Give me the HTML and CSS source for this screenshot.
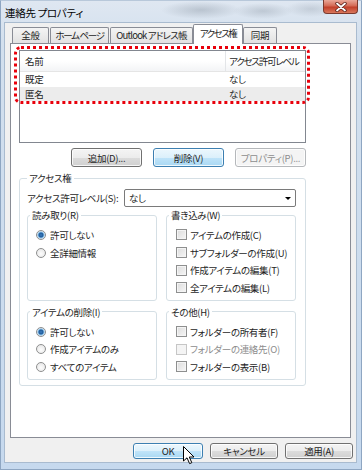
FILE: index.html
```html
<!DOCTYPE html>
<html lang="ja">
<head>
    <meta charset="UTF-8">
    <meta name="viewport" content="width=device-width, initial-scale=1.0">
    <title>連絡先 プロパティ</title>
    <link rel="stylesheet" href="styles.css">
</head>
<body>
    <div class="window">
        <div class="titlebar">
            <span class="title">連絡先 プロパティ</span>
            <div class="close-btn">
                <svg width="12" height="10" viewBox="0 0 12 10">
                    <path d="M2 1.5 L10 8.5 M10 1.5 L2 8.5" stroke="#5a2018" stroke-width="3.4" stroke-linecap="round"/>
                    <path d="M2 1.5 L10 8.5 M10 1.5 L2 8.5" stroke="#fff" stroke-width="1.8" stroke-linecap="round"/>
                </svg>
            </div>
        </div>
        <div class="client">
            <div class="tabs">
                <div class="tab tab-general">全般</div>
                <div class="tab tab-home">ホーム ページ</div>
                <div class="tab tab-outlook">Outlook アドレス帳</div>
                <div class="tab tab-access active">アクセス権</div>
                <div class="tab tab-sync">同期</div>
            </div>
            <div class="pane">
                <div class="list-area">
                    <div class="list">
                        <div class="list-head">
                            <span class="col-name">名前</span>
                            <span class="col-level">アクセス許可レベル</span>
                        </div>
                        <div class="list-row">
                            <span class="col-name">既定</span>
                            <span class="col-level">なし</span>
                        </div>
                        <div class="list-row selected">
                            <span class="col-name">匿名</span>
                            <span class="col-level">なし</span>
                        </div>
                    </div>
                    <div class="highlight"></div>
                </div>
                <div class="list-buttons">
                    <button class="btn">追加(D)...</button>
                    <button class="btn focused">削除(V)</button>
                    <button class="btn" disabled>プロパティ(P)...</button>
                </div>
                <fieldset class="group outer">
                    <legend>アクセス権</legend>
                    <div class="level-row">
                        <span class="level-label">アクセス許可レベル(S):</span>
                        <div class="combo">
                            <span>なし</span>
                            <span class="combo-arrow"></span>
                        </div>
                    </div>
                    <div class="group-grid">
                        <fieldset class="group">
                            <legend>読み取り(R)</legend>
                            <ul class="options">
                                <li><span class="radio checked"></span>許可しない</li>
                                <li><span class="radio"></span>全詳細情報</li>
                            </ul>
                        </fieldset>
                        <fieldset class="group">
                            <legend>書き込み(W)</legend>
                            <ul class="options">
                                <li><span class="check"></span>アイテムの作成(C)</li>
                                <li><span class="check"></span>サブフォルダーの作成(U)</li>
                                <li><span class="check"></span>作成アイテムの編集(T)</li>
                                <li><span class="check"></span>全アイテムの編集(L)</li>
                            </ul>
                        </fieldset>
                        <fieldset class="group">
                            <legend>アイテムの削除(I)</legend>
                            <ul class="options">
                                <li><span class="radio checked"></span>許可しない</li>
                                <li><span class="radio"></span>作成アイテムのみ</li>
                                <li><span class="radio"></span>すべてのアイテム</li>
                            </ul>
                        </fieldset>
                        <fieldset class="group">
                            <legend>その他(H)</legend>
                            <ul class="options">
                                <li><span class="check"></span>フォルダーの所有者(F)</li>
                                <li class="disabled"><span class="check"></span>フォルダーの連絡先(O)</li>
                                <li><span class="check"></span>フォルダーの表示(B)</li>
                            </ul>
                        </fieldset>
                    </div>
                </fieldset>
            </div>
            <div class="dialog-buttons">
                <button class="btn default">OK</button>
                <button class="btn">キャンセル</button>
                <button class="btn">適用(A)</button>
                <svg class="cursor" width="12" height="19" viewBox="0 0 12 19">
                    <path d="M0.5 0.5 L0.5 15 L4 11.8 L6.6 17.6 L8.8 16.7 L6.3 11 L11 11 Z" fill="#fff" stroke="#000" stroke-width="1" stroke-linejoin="round"/>
                </svg>
            </div>
        </div>
    </div>
</body>
</html>
```

FILE: styles.css
```css
body {
    margin: 0;
    font-family: "Noto Sans CJK JP", "Noto Sans", sans-serif;
    font-size: 9.5px;
    line-height: 12px;
    letter-spacing: -0.3px;
    font-feature-settings: "palt" 1;
    white-space: nowrap;
    color: #1e1e1e;
}
.window {
    width: 362px;
    height: 470px;
    box-sizing: border-box;
    display: flex;
    flex-direction: column;
    background:
        radial-gradient(ellipse 40px 9px at 200px 9px, rgba(120, 132, 146, 0.35), transparent),
        radial-gradient(ellipse 30px 8px at 262px 10px, rgba(120, 132, 146, 0.3), transparent),
        radial-gradient(ellipse 26px 8px at 310px 8px, rgba(120, 132, 146, 0.25), transparent),
        linear-gradient(to bottom, #dfe7f1 0, #d3e0ee 40px, #c6d9ee 100%);
    border: 1px solid #8ea6c2;
    border-top-color: #b8c8da;
}
.titlebar {
    height: 21px;
    display: flex;
    justify-content: space-between;
    align-items: flex-start;
}
.title {
    font-size: 10.5px;
    line-height: 13px;
    margin: 5px 0 0 4px;
    color: #000;
}
.close-btn {
    width: 35px;
    height: 14px;
    margin-right: 3px;
    margin-top: -1px;
    box-sizing: border-box;
    border: 1px solid #7b3a2e;
    border-top: none;
    border-radius: 0 0 4px 4px;
    background: linear-gradient(to bottom, #e9a898 0, #d46a55 45%, #c2402a 55%, #d9775c 100%);
    display: flex;
    align-items: center;
    justify-content: center;
}
.client {
    flex: 1;
    margin: 0 4px 6px 3px;
    background: #f0f0f0;
    border: 1px solid #a9bbcf;
    display: flex;
    flex-direction: column;
}
.tabs {
    height: 20px;
    display: flex;
    align-items: flex-end;
    padding-left: 7px;
}
.tab {
    height: 16px;
    box-sizing: border-box;
    padding-top: 1px;
    margin-right: 1px;
    text-align: center;
    border: 1px solid #898c95;
    border-bottom: none;
    border-radius: 2px 2px 0 0;
    background: linear-gradient(to bottom, #f4f4f4, #e2e2e2);
}
.tab-general { width: 37px; }
.tab-home { width: 59px; letter-spacing: -1.3px; }
.tab-outlook { width: 83px; letter-spacing: -0.8px; }
.tab-access { width: 50px; letter-spacing: -1.5px; }
.tab-sync { width: 34px; }
.tab.active {
    height: 20px;
    margin: 0 0 -1px -1px;
    padding-top: 2px;
    background: #fff;
    position: relative;
    z-index: 1;
}
.pane {
    height: 395px;
    box-sizing: border-box;
    margin: 0 5px 0 5px;
    border: 1px solid #898c95;
    background: #fff;
    padding: 6px 44px 0 8px;
}
.list-area {
    position: relative;
}
.list {
    height: 93px;
    box-sizing: border-box;
    border: 1px solid #828790;
    overflow: hidden;
}
.list-head {
    height: 20px;
    display: flex;
    align-items: center;
    background: linear-gradient(to bottom, #ffffff 0, #ffffff 50%, #f3f4f6 100%);
    border-bottom: 1px solid #e5e5e5;
}
.list-row {
    height: 14.5px;
    display: flex;
    align-items: center;
}
.list-row.selected {
    background: #ececec;
}
.col-name {
    width: 206px;
    flex: none;
    padding-left: 5px;
    box-sizing: border-box;
}
.list-head .col-name {
    border-right: 1px solid #e3e5e8;
    height: 20px;
    line-height: 20px;
}
.col-level {
    padding-left: 3px;
}
.list-head .col-level {
    letter-spacing: -1.2px;
}
.highlight {
    position: absolute;
    left: -5px;
    top: -4px;
    width: 296px;
    height: 58px;
    box-sizing: border-box;
    border: 3px dotted #e8000b;
    border-radius: 7px;
}
.list-buttons {
    display: flex;
    justify-content: flex-end;
    gap: 11px;
    margin-top: 5px;
}
.btn {
    font-family: inherit;
    font-size: 9.5px;
    letter-spacing: -0.3px;
    font-feature-settings: "palt" 1;
    line-height: 12px;
    width: 71px;
    height: 19px;
    padding: 0;
    color: #1e1e1e;
    border: 1px solid #707070;
    border-radius: 3px;
    background: linear-gradient(to bottom, #f4f4f4 0, #ececec 50%, #dcdcdc 51%, #d0d0d0 100%);
    box-shadow: inset 0 0 0 1px rgba(255, 255, 255, 0.8);
}
.btn.focused,
.btn.default {
    border-color: #3c7fb1;
    background: linear-gradient(to bottom, #ecf7fd 0, #dcf0fb 50%, #c0e4f9 51%, #a9d8f3 100%);
}
.btn:disabled {
    color: #8d8d8d;
    border-color: #b5b8bb;
    background: #f4f4f4;
}
.group {
    margin: 0;
    padding: 0 0 3px 2px;
    border: 1px solid #d5dfe5;
    border-radius: 3px;
    min-width: 0;
}
.group legend {
    padding: 0 2px;
}
.group.outer {
    margin-top: 5px;
    padding: 0 9px 5px 7px;
}
.level-row {
    display: flex;
    align-items: center;
    margin-top: 5px;
}
.level-label {
    width: 97px;
    flex: none;
}
.combo {
    flex: 1;
    height: 18px;
    box-sizing: border-box;
    border: 1px solid #7a7a7a;
    border-radius: 2px;
    background: #fff;
    display: flex;
    align-items: center;
    justify-content: space-between;
    padding: 0 4px 0 4px;
}
.combo-arrow {
    width: 0;
    height: 0;
    border-left: 3px solid transparent;
    border-right: 3px solid transparent;
    border-top: 3px solid #000;
}
.group-grid {
    display: grid;
    grid-template-columns: 130px 130px;
    column-gap: 9px;
    row-gap: 5px;
    margin-top: 2px;
}
.options {
    list-style: none;
    margin: 5px 0 0;
    padding: 0;
}
.options li {
    height: 17.7px;
    display: flex;
    align-items: center;
    padding-left: 6px;
}
.options li.disabled {
    color: #8d8d8d;
}
.radio {
    width: 10px;
    height: 10px;
    box-sizing: border-box;
    margin-right: 4px;
    border: 1px solid #8e8f8f;
    border-radius: 50%;
    background: radial-gradient(circle at 50% 60%, #fdfdfd 0, #e2e2e2 100%);
    flex: none;
}
.radio.checked {
    background: radial-gradient(circle, #3d7ec0 0, #1f5a99 2px, #8cc2ea 3px, #e7eef4 4px);
}
.check {
    width: 11px;
    height: 11px;
    box-sizing: border-box;
    margin-right: 3px;
    margin-left: 1px;
    border: 1px solid #8e8f8f;
    background: linear-gradient(135deg, #dcdcdc 0, #f6f6f6 100%);
    box-shadow: inset 0 0 0 1px #f4f4f4;
    flex: none;
}
.options li.disabled .check {
    border-color: #c6c6c6;
    background: #f4f4f4;
}
.dialog-buttons {
    position: relative;
    display: flex;
    justify-content: flex-end;
    gap: 7px;
    margin: 5px 3px 0 0;
}
.dialog-buttons .btn {
    width: 68px;
    height: 16px;
}
.dialog-buttons .btn.default {
    width: 70px;
}
.cursor {
    position: absolute;
    left: 178px;
    top: 3px;
}
```
